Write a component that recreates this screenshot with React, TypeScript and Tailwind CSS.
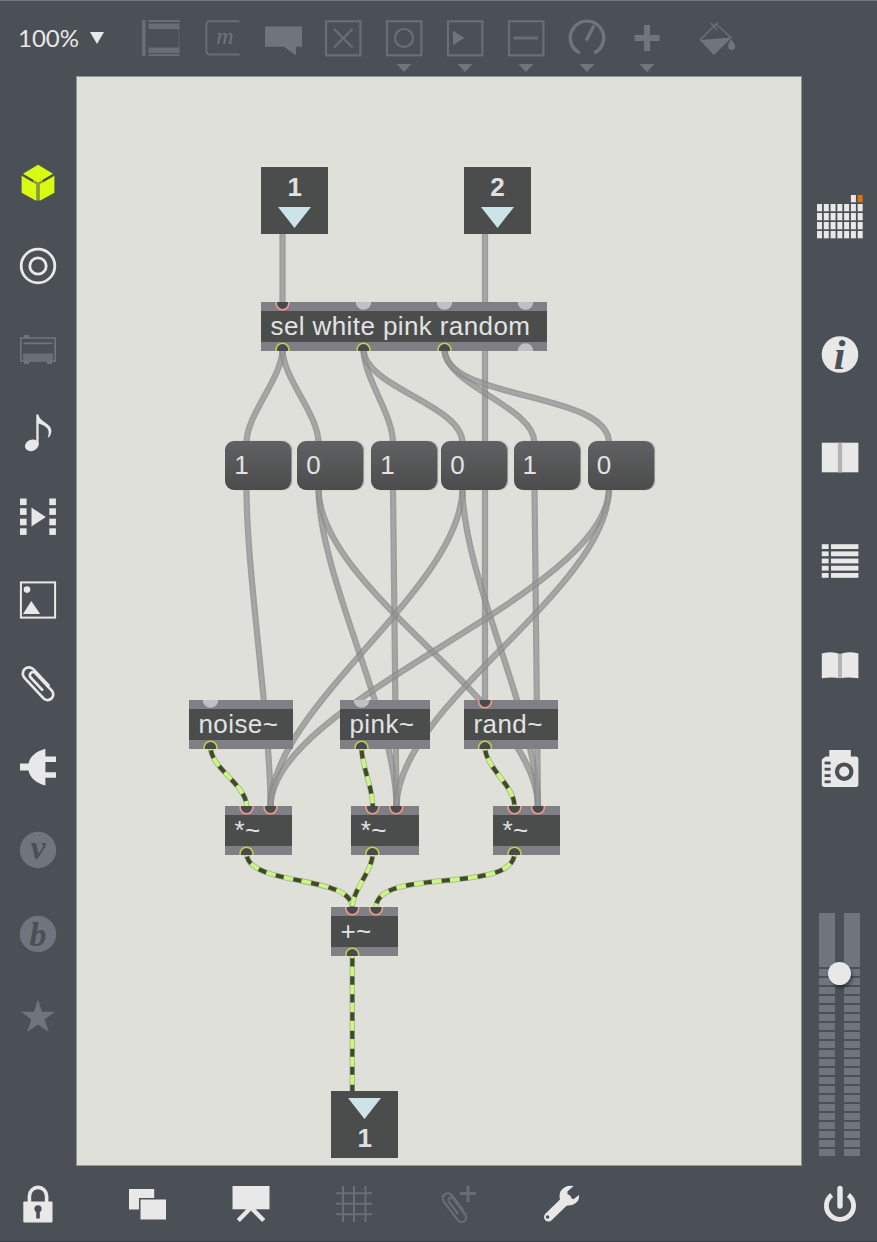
import type { ReactNode } from 'react';

const LIGHT = '#e8e8e8';
const DIM = '#70757d';
const BG = '#4b4f56';

function Icon({ children, size = 48 }: { children: ReactNode; size?: number }) {
  return (
    <svg width={size} height={size} viewBox={`${-size / 2} ${-size / 2} ${size} ${size}`} className="block shrink-0">
      {children}
    </svg>
  );
}

function Clip() {
  return (
    <path
      d="M6 10V-13a6.2 6.2 0 0 0-12.4 0V15a5.6 5.6 0 0 0 11.2 0V-9a3.2 3.2 0 0 0-6.4 0V9"
      transform="rotate(-43)"
      fill="none"
      stroke="currentColor"
      strokeWidth="2.7"
    />
  );
}

function Glyph({ ch, y = 7 }: { ch: string; y?: number }) {
  return (
    <text y={y} textAnchor="middle" fill={BG} className="font-['Liberation_Serif',serif] text-[34px] font-bold italic">
      {ch}
    </text>
  );
}

const leftIcons: ReactNode[] = [
  <g fill="#d9fb12">
    <path d="M-5 -8L5 -8V15L0 18L-5 15Z" opacity=".45" />
    <path d="M0 -18.3L15 -9.3L0 -.6L-15 -9.3Z" />
    <path d="M-16.4 -7.2L-1.9 1.2V17.8L-16.4 9.8Z" />
    <path d="M16.4 -7.2L1.9 1.2V17.8L16.4 9.8Z" />
  </g>,
  <g fill="none" stroke={LIGHT} strokeWidth="2.8">
    <circle r="16.8" />
    <circle r="8.2" />
  </g>,
  <g fill={DIM}>
    <rect x="-17.2" y="-12" width="34.4" height="23" fill="none" stroke={DIM} strokeWidth="1.6" />
    <rect x="-14" y="-15" width="5" height="3" />
    <rect x="-14.5" y="-7.6" width="29" height="1.8" />
    <rect x="-15" y="3.5" width="30" height="7" opacity=".8" />
    <rect x="-14" y="11" width="5" height="3" />
    <rect x="9" y="11" width="5" height="3" />
  </g>,
  <g fill={LIGHT}>
    <ellipse cx="-6.2" cy="12.3" rx="7" ry="5.6" transform="rotate(-22 -6.2 12.3)" />
    <path d="M-1.7 -18.5H.4C1.6 -11 14 -9.5 13.4 -1.5Q13.2 2 10.7 4.6L9.6 4Q12.2 -1 9 -5Q6 -8.4 .6 -9.6V12H-1.7Z" />
  </g>,
  <g fill={LIGHT}>
    {[-18.5, -8.7, 1.7, 11.3].map((y) => (
      <g key={y}>
        <rect x="-18" y={y} width="6.6" height="6.6" />
        <rect x="11.3" y={y} width="6.6" height="6.6" />
      </g>
    ))}
    <path d="M-6.5 -9.4L7.8 0L-6.5 9.4Z" />
  </g>,
  <g fill={LIGHT}>
    <rect x="-17.1" y="-17.6" width="34.2" height="35.2" fill="none" stroke={LIGHT} strokeWidth="2" />
    <circle cx="-11" cy="-10.4" r="3.3" />
    <path d="M-15 14L-6.7 1L2.2 14Z" />
  </g>,
  <g color={LIGHT}>
    <Clip />
  </g>,
  <g fill={LIGHT}>
    <path d="M-18 -3.4H-9.5Q-7.5 -14 7.4 -18.3V-10.6H18V-5H7.4V5.2H18V10.8H7.4V18.6Q-7.5 14 -9.5 3.4H-18Z" />
  </g>,
  <g fill={DIM}>
    <circle r="18.2" />
    <Glyph ch="v" y={8.5} />
  </g>,
  <g fill={DIM}>
    <circle r="18.2" />
    <Glyph ch="b" y={11.5} />
  </g>,
  <path
    fill={DIM}
    d="M0 -17.5L4 -5.2H17L6.6 2.5L10.8 15L0 7.4L-10.8 15L-6.6 2.5L-17 -5.2H-4Z"
  />,
];

const rightIcons: ReactNode[] = [
  <g fill={LIGHT}>
    <circle cy="-.5" r="18.3" />
    <text y="13.8" x="-.5" textAnchor="middle" fill={BG} className="font-['Liberation_Serif',serif] text-[42px] font-bold italic">
      i
    </text>
  </g>,
  <g fill={LIGHT}>
    <rect x="-18.2" y="-15.3" width="36.6" height="29.6" />
    <rect x="-2.2" y="-15.3" width="4.4" height="29.6" fill="#b4b4b4" />
  </g>,
  <g fill={LIGHT}>
    {[-17.8, -10.6, -3.4, 3.8, 11].map((y) => (
      <g key={y}>
        <rect x="-18.2" y={y} width="6.8" height="4.8" />
        <rect x="-9" y={y} width="27.4" height="4.8" />
      </g>
    ))}
  </g>,
  <g fill={LIGHT}>
    <path d="M-18.2 -12.5Q-8 -15 0 -12Q8 -15 18.4 -12.5V12.2Q8 11 0 12.2Q-8 11 -18.2 12.2Z" />
    <rect x="-2" y="-12" width="4" height="24" fill="#b4b4b4" />
  </g>,
  <g fill={LIGHT}>
    <path d="M-10.7 -19H10.8V-12.5H16Q18.4 -12.5 18.4 -10V15.3Q18.4 18 16 18H-15.6Q-18.2 18 -18.2 15.3V-9.6L-14.5 -12.5H-10.7Z" />
    <circle cx="4.2" cy="2.7" r="7.2" fill="none" stroke={BG} strokeWidth="4.2" />
    {[-7.4, -1.2, 5.2, 11.4].map((y) => (
      <rect key={y} x="-15.4" y={y} width="6" height="2.8" fill={BG} />
    ))}
  </g>,
];

function BottomIcon({ children }: { children: ReactNode }) {
  return (
    <div className="flex w-[103.2px] justify-center">
      <Icon>{children}</Icon>
    </div>
  );
}

const topIcons: { art: ReactNode; menu?: boolean }[] = [
  {
    art: (
      <g fill="currentColor">
        <rect x="-19" y="-18" width="3.6" height="36" />
        <rect x="-12.5" y="-18" width="31" height="2" />
        <rect x="-12.5" y="-14.5" width="31" height="5.5" />
        <rect x="-12.5" y="9.5" width="31" height="5.5" />
        <rect x="-12.5" y="16" width="31" height="2" />
        <rect x="17.4" y="-18" width="1" height="36" opacity=".6" />
      </g>
    ),
  },
  {
    art: (
      <g>
        <path d="M17.5 -16.8H-12Q-15.6 -16.8 -15.6 -13V13Q-15.6 16.6 -12 16.6H17.5" fill="none" stroke="currentColor" strokeWidth="2" />
        <text x="3" y="6" textAnchor="middle" fill={DIM} className="font-['Liberation_Serif',serif] text-[24px] italic">
          m
        </text>
      </g>
    ),
  },
  { art: <path fill={DIM} d="M-18 -11.5H19V8.7H13V17.5L1 8.7H-18Z" /> },
  {
    art: (
      <g fill="none" stroke="currentColor" strokeWidth="2.2">
        <rect x="-17" y="-16.7" width="34.4" height="34" />
        <path d="M-9 -9L9.5 9.5M9.5 -9L-9 9.5" />
      </g>
    ),
  },
  {
    menu: true,
    art: (
      <g fill="none" stroke="currentColor" strokeWidth="2.2">
        <rect x="-17" y="-16.7" width="34.4" height="34" />
        <circle r="9" />
      </g>
    ),
  },
  {
    menu: true,
    art: (
      <g fill="none" stroke="currentColor" strokeWidth="2.2">
        <rect x="-17" y="-16.7" width="34.4" height="34" />
        <path d="M-12 -7.3L-.7 0L-12 7.3Z" fill={DIM} stroke="none" />
      </g>
    ),
  },
  {
    menu: true,
    art: (
      <g fill="none" stroke="currentColor" strokeWidth="2.2">
        <rect x="-17" y="-16.7" width="34.4" height="34" />
        <path d="M-12.5 0H12" strokeWidth="3" />
      </g>
    ),
  },
  {
    menu: true,
    art: (
      <g fill="none" stroke={DIM} strokeWidth="3.4">
        <path d="M-7 15A16.7 16.7 0 1 1 7 15" />
        <path d="M-.8 2.6L7 -12.5" />
      </g>
    ),
  },
  { menu: true, art: <path d="M-12.5 0H12.5M0 -13V13" stroke={DIM} strokeWidth="6" /> },
  {
    art: (
      <g fill={DIM}>
        <path d="M-16.6 1.6L-1 -14L13.8 -.6L-3 16Z" fill="none" stroke="currentColor" strokeWidth="1.6" />
        <path d="M-17 2L13.8 -.6L-3 16.5Z" />
        <path d="M-6.5 -15L0 -8M1 -15.5L-3.5 -11" stroke="currentColor" strokeWidth="1.6" />
        <path d="M14 1Q18.5 7 18.3 9A3.6 3.6 0 0 1 11.2 9Q11 6 14 1Z" />
      </g>
    ),
  },
];

type Port = { x: number; live?: boolean };
type Box = { x: number; y: number; w: number; label: string; ins: Port[]; outs: Port[] };

const boxes: Box[] = [
  {
    x: 261, y: 301.5, w: 286, label: 'sel white pink random',
    ins: [{ x: 282.5, live: true }, { x: 363.5 }, { x: 444.5 }, { x: 525.5 }],
    outs: [{ x: 282.5, live: true }, { x: 363.5, live: true }, { x: 444.5, live: true }, { x: 525.5 }],
  },
  { x: 189, y: 699.6, w: 103.5, label: 'noise~', ins: [{ x: 210.5 }], outs: [{ x: 210.5, live: true }] },
  { x: 340, y: 699.6, w: 90, label: 'pink~', ins: [{ x: 361.5 }], outs: [{ x: 361.5, live: true }] },
  { x: 464, y: 699.6, w: 94, label: 'rand~', ins: [{ x: 485, live: true }], outs: [{ x: 485, live: true }] },
  { x: 225, y: 805.5, w: 67.4, label: '*~', ins: [{ x: 246.5, live: true }, { x: 270.5, live: true }], outs: [{ x: 246.5, live: true }] },
  { x: 351.3, y: 805.5, w: 67.4, label: '*~', ins: [{ x: 372.7, live: true }, { x: 396.5, live: true }], outs: [{ x: 372.7, live: true }] },
  { x: 493, y: 805.5, w: 67.4, label: '*~', ins: [{ x: 514.5, live: true }, { x: 538, live: true }], outs: [{ x: 514.5, live: true }] },
  { x: 331, y: 906.8, w: 67.4, label: '+~', ins: [{ x: 352.3, live: true }, { x: 376, live: true }], outs: [{ x: 352.3, live: true }] },
];

const messages = [
  { x: 225.3, label: '1' },
  { x: 297.3, label: '0' },
  { x: 371.3, label: '1' },
  { x: 441.3, label: '0' },
  { x: 513.5, label: '1' },
  { x: 587.7, label: '0' },
];

type Wire = [number, number, number, number];

const wires: Wire[] = [
  [282.5, 233, 282.5, 303],
  [485, 233, 485, 702],
  [282.5, 349, 246.5, 443],
  [282.5, 349, 318.5, 443],
  [363.5, 349, 393, 443],
  [363.5, 349, 462.5, 443],
  [444.5, 349, 534.5, 443],
  [444.5, 349, 609, 443],
  [246.5, 488, 270.5, 807],
  [318.5, 488, 396.5, 807],
  [318.5, 488, 538, 807],
  [393, 488, 396.5, 807],
  [462.5, 488, 270.5, 807],
  [462.5, 488, 538, 807],
  [534.5, 488, 538, 807],
  [609, 488, 270.5, 807],
  [609, 488, 396.5, 807],
];

const signals: Wire[] = [
  [210.5, 747, 246.5, 806],
  [361.5, 747, 372.7, 806],
  [485, 747, 514.5, 806],
  [246.5, 853, 352.3, 908],
  [372.7, 853, 352.3, 908],
  [514.5, 853, 376, 908],
  [352.3, 955, 352.3, 1091],
];

function curve([x1, y1, x2, y2]: Wire) {
  const d = Math.min(Math.hypot(x2 - x1, y2 - y1) * 0.26 + 3, 108);
  return `M${x1} ${y1}C${x1} ${y1 + d} ${x2} ${y2 - d} ${x2} ${y2}`;
}

const CX = 77;
const CY = 77;

function PortMark({ port, left, kind }: { port: Port; left: number; kind: 'in' | 'out' }) {
  const color = kind === 'in' ? '#f09a8d' : '#c3cb50';
  const cy = kind === 'in' ? 1.3 : 7.7;
  return port.live ? (
    <circle cx={port.x - left} cy={cy} r="6.4" fill="#474b4f" stroke={color} strokeWidth="1.6" />
  ) : (
    <circle cx={port.x - left} cy={kind === 'in' ? 0 : 9} r="7.8" fill="#bfbfc5" />
  );
}

function PatchBox({ box }: { box: Box }) {
  return (
    <div
      className="absolute flex h-[49px] flex-col bg-[#4a4d4b]"
      style={{ left: box.x - CX, top: box.y - CY, width: box.w }}
    >
      <svg height="9" className="block w-full shrink-0 bg-[#7f7f85]">
        {box.ins.map((p) => (
          <PortMark key={p.x} port={p} left={box.x} kind="in" />
        ))}
      </svg>
      <div className="flex flex-1 items-center pl-[9.5px] text-[26px] leading-[26px] tracking-[0.4px] whitespace-nowrap text-[#e2e2e4]">
        {box.label}
      </div>
      <svg height="9" className="block w-full shrink-0 bg-[#7f7f85]">
        {box.outs.map((p) => (
          <PortMark key={p.x} port={p} left={box.x} kind="out" />
        ))}
      </svg>
    </div>
  );
}

function Endpoint({ x, y, label, outlet = false }: { x: number; y: number; label: string; outlet?: boolean }) {
  const arrow = (
    <svg width="33" height="21" className="block shrink-0">
      <path d="M0 0H33L16.5 21Z" fill="#cce3e7" />
    </svg>
  );
  return (
    <div
      className="absolute flex h-[67.4px] w-[67.4px] flex-col items-center bg-[#4a4d4b] text-[26px] leading-[26px] font-bold text-[#e0e0e2]"
      style={{ left: x - CX, top: y - CY }}
    >
      {outlet ? (
        <>
          <div className="pt-[7px]">{arrow}</div>
          <div className="pt-[6px]">{label}</div>
        </>
      ) : (
        <>
          <div className="pt-[7px]">{label}</div>
          <div className="pt-[7px]">{arrow}</div>
        </>
      )}
    </div>
  );
}

function Patcher() {
  return (
    <main className="relative h-[1088px] w-[724px] shrink-0 overflow-hidden bg-[#dfe0da] font-['Liberation_Sans',Arial,sans-serif] shadow-[0_0_0_1px_#92948f]">
      <svg width="724" height="1088" viewBox="77 77 724 1088" className="absolute inset-0" fill="none">
        {wires.map((w) => (
          <g key={w.join()} opacity=".78">
            <path d={curve(w)} stroke="#8b8b8b" strokeWidth="6.2" />
            <path d={curve(w)} stroke="#979796" strokeWidth="3" />
          </g>
        ))}
        {signals.map((w) => (
          <g key={w.join()}>
            <path d={curve(w)} stroke="#a9b191" strokeWidth="5.4" />
            <path d={curve(w)} stroke="#cdf582" strokeWidth="3.8" />
            <path d={curve(w)} stroke="#414a2c" strokeWidth="4.2" strokeDasharray="8.2 9.8" strokeDashoffset="-3.5" />
          </g>
        ))}
      </svg>
      <Endpoint x={261} y={166.5} label="1" />
      <Endpoint x={463.7} y={166.5} label="2" />
      {boxes.map((b) => (
        <PatchBox key={`${b.x}-${b.y}`} box={b} />
      ))}
      {messages.map((m) => (
        <div
          key={m.x}
          className="absolute flex h-[49px] w-[66px] items-center rounded-[9px] bg-linear-to-b from-[#606164] to-[#4a4d4b] pb-[2px] pl-[9px] text-[26px] leading-[26px] text-[#e2e2e4] shadow-[1px_0_1px_#8b8c89]"
          style={{ left: m.x - CX, top: 441 - CY }}
        >
          {m.label}
        </div>
      ))}
      <Endpoint x={331} y={1091} label="1" outlet />
    </main>
  );
}

function TopBar() {
  return (
    <header className="flex h-[77px] shrink-0 border-t border-[#747980]">
      <div className="flex h-[74px] w-[130.6px] shrink-0 items-center gap-[11px] pl-[18px] font-['Lato',sans-serif] text-[24px] text-[#e8e8e8]">
        <span>100%</span>
        <svg width="14" height="12" className="block">
          <path d="M0 0H14L7 12Z" fill={LIGHT} />
        </svg>
      </div>
      {topIcons.map((t, i) => (
        <div key={i} className="flex h-[76px] w-[60.8px] shrink-0 justify-center text-[#696d74] last:ml-[9px]">
          <svg width="48" height="76" viewBox="-24 -37 48 76" className="block">
            {t.art}
            {t.menu && <path d="M-7.5 26H7.5L0 34Z" fill={DIM} />}
          </svg>
        </div>
      ))}
    </header>
  );
}

function Meter() {
  return (
    <div className="flex w-[16.3px] flex-col gap-[2px]">
      <div className="h-[54px] bg-[#70757d]" />
      {Array.from({ length: 21 }, (_, i) => (
        <div key={i} className="h-[7px] bg-[#70757d]" />
      ))}
    </div>
  );
}

function RightBar() {
  return (
    <aside className="flex w-[76px] shrink-0 flex-col items-center pl-[1.4px]">
      <div className="flex h-[226px] items-center pt-[54px]">
        <svg width="46" height="44" className="block">
          {[5, 6].map((c) => (
            <rect key={c} x={c * 6.78} y="0" width="5" height="7.3" fill={c === 6 ? '#dc750f' : LIGHT} />
          ))}
          {[0, 1, 2, 3].flatMap((r) =>
            [0, 1, 2, 3, 4, 5, 6].map((c) => (
              <rect key={`${r}-${c}`} x={c * 6.78} y={9 + r * 9} width="5" height="7.3" fill={LIGHT} />
            )),
          )}
        </svg>
      </div>
      {rightIcons.map((art, i) => (
        <div key={i} className="flex h-[103.6px] shrink-0 items-center">
          <Icon>{art}</Icon>
        </div>
      ))}
      <div className="relative mt-[92px] flex gap-[8.5px]">
        <Meter />
        <Meter />
        <div className="absolute top-[49px] left-[9px] h-[23px] w-[23px] rounded-full bg-[#e8e8e8] shadow-[2px_3px_3px_rgba(0,0,0,0.35)]" />
      </div>
    </aside>
  );
}

export default function App() {
  return (
    <div className="flex h-[1242px] w-[877px] flex-col overflow-hidden bg-[#4b4f56]">
      <TopBar />
      <div className="flex h-[1088px] shrink-0">
        <nav className="flex w-[77px] shrink-0 flex-col items-center pt-[64.3px] pr-[1.2px]">
          {leftIcons.map((art, i) => (
            <div key={i} className="flex h-[83.4px] shrink-0 items-center">
              <Icon>{art}</Icon>
            </div>
          ))}
        </nav>
        <Patcher />
        <RightBar />
      </div>
      <footer className="flex h-[77px] shrink-0 items-center border-b border-[#3b3e44] pt-[1px]">
        <div className="flex w-[96.4px] shrink-0 pl-[14px]">
          <Icon>
            <path d="M-8.6 -1V-8A8.6 8.6 0 0 1 8.6 -8V-1" fill="none" stroke={LIGHT} strokeWidth="3.6" />
            <rect x="-14.7" y="-2.5" width="29.2" height="21" rx="1" fill={LIGHT} />
            <circle cy="4.8" r="3.6" fill={BG} />
            <rect x="-1.8" y="5" width="3.6" height="9.5" fill={BG} />
          </Icon>
        </div>
        <BottomIcon>
          <rect x="-19" y="-15" width="25.2" height="20.5" fill={LIGHT} />
          <rect x="-9" y="-6" width="28" height="22.7" fill={BG} />
          <rect x="-7.5" y="-4.5" width="25.5" height="20" fill={LIGHT} />
        </BottomIcon>
        <BottomIcon>
          <rect x="-18.5" y="-18" width="37" height="23.3" fill={LIGHT} />
          <path d="M-12.7 16.5L-1 4.5M12.7 16.5L1 4.5" stroke={LIGHT} strokeWidth="4.4" />
        </BottomIcon>
        <BottomIcon>
          <path
            d="M-11 -18V18M0 -18V18M11.4 -18V18M-18 -10.7H18M-18 -.3H18M-18 10.2H18"
            stroke={DIM}
            strokeWidth="2"
            opacity=".85"
          />
        </BottomIcon>
        <BottomIcon>
          <g color={DIM} opacity=".8">
            <g transform="translate(-3.5 3) rotate(6) scale(.83)">
              <Clip />
            </g>
            <path d="M2 -10.5H18M10 -18.5V-2" stroke="currentColor" strokeWidth="3" />
          </g>
        </BottomIcon>
        <BottomIcon>
          <path d="M-12.5 13L6 -5" stroke={LIGHT} strokeWidth="9" strokeLinecap="round" />
          <path
            d="M12.6 -18Q4 -19.5 -.6 -12.5Q-2 -9.5 -1.2 -5L4.5 1.2Q10 2.6 14.5 -.8Q18.8 -4 18 -9L12.4 -4.8L6.8 -7.4L6.4 -12.6Z"
            fill={LIGHT}
          />
          <circle cx="-13.4" cy="13" r="1.8" fill={BG} />
        </BottomIcon>
        <div className="ml-auto flex w-[76px] shrink-0 justify-center pl-[1.4px]">
          <Icon>
            <path d="M-8.3 -9A13.6 13.6 0 1 0 8.3 -9" fill="none" stroke={LIGHT} strokeWidth="4.8" />
            <path d="M0 -15.5V2" stroke={LIGHT} strokeWidth="5.4" strokeLinecap="round" />
          </Icon>
        </div>
      </footer>
    </div>
  );
}
